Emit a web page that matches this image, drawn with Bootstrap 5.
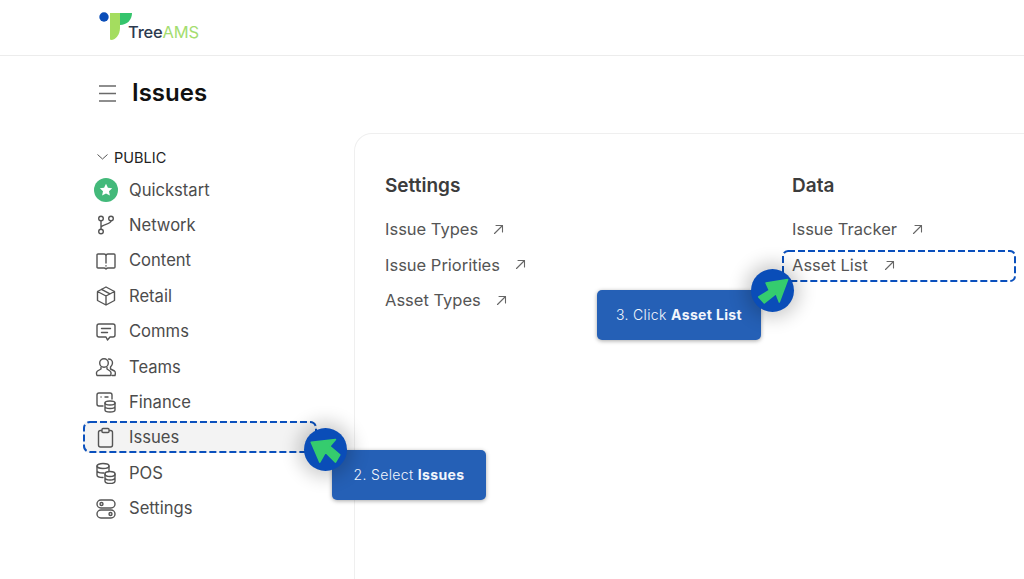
<!DOCTYPE html>
<html lang="en">
<head>
<meta charset="utf-8">
<title>Issues</title>
<link rel="stylesheet" href="https://cdn.jsdelivr.net/npm/bootstrap@5.3.0/dist/css/bootstrap.min.css">
<style>
html,body{height:579px;overflow:hidden}
body{font-family:"Inter","Liberation Sans",sans-serif;background:#fff;color:#454545}
svg{display:block;flex:none}
.stroke-ic{fill:none;stroke:#555;stroke-width:1.4;stroke-linecap:round;stroke-linejoin:round}
.arrow-ic{fill:none;stroke:#666;stroke-width:1.1;stroke-linecap:round;stroke-linejoin:round}
.top-bar{height:56px;padding-left:99px;border-bottom:1px solid #ececec}
.brand-mark{margin-top:12px}
.brand-word{font-size:16.5px;line-height:1;letter-spacing:-.2px;margin-left:-5px;margin-top:24px;color:#2c3a4f;font-weight:500}
.brand-word span{color:#a4dd6f;font-weight:400}
.title-row{height:77px;padding:0 0 2px 99px;gap:16px}
.title-row h1{font-size:24px;font-weight:600;color:#111;margin:0}
.work-area{height:446px}
.side-col{width:354px;flex:none;padding:15.4px 37px 0 83px}
.group-label{height:18px;padding-left:14px;gap:6px;font-size:14.5px;color:#222;margin-bottom:6px}
.menu-row{height:35.4px;gap:12px;padding-left:10px;font-size:16.6px;color:#4c4c4c;border:2px solid transparent;border-radius:6px}
.menu-row.active-row{height:32px;margin:.6px 0 2.8px;padding-top:2px;background:#f3f3f3;border-color:transparent}
.ic-slot{width:22px;display:flex;justify-content:center}
.panel-box{flex:1;border:1px solid #efefef;border-right:0;border-bottom:0;border-top-left-radius:18px;padding:37px 0 0 30px}
.panel-col{width:407px}
.panel-col+.panel-col{width:auto;flex:1}
.panel-col h2{font-size:19px;font-weight:600;color:#3c3c3c;margin:0 0 11px;line-height:30px}
.link-row{height:35.3px;gap:15px;font-size:16.5px;color:#555}
.link-row.marked{margin:3px 8px 0 -10px;padding:0 0 2px 10px;height:32px;width:234px;gap:16px}
.dash-frame{position:absolute;top:0;left:0;width:100%;height:100%;overflow:visible;pointer-events:none}
.dash-frame rect{x:1px;y:1px;width:calc(100% - 2px);height:calc(100% - 2px);fill:none;stroke:#0a50bd;stroke-width:2;stroke-dasharray:7 3}
.active-row .dash-frame{top:-2px;left:-2px;width:calc(100% + 4px);height:calc(100% + 4px)}
.callout{position:absolute;background:#2560b6;color:#f2f6fc;border-radius:5px;font-size:14px;font-weight:300;letter-spacing:.35px;height:50px;padding-bottom:2px;display:flex;align-items:center;justify-content:center;box-shadow:0 1px 4px rgba(0,0,0,.35)}
.callout b{font-weight:700}
.callout-issues{left:332px;top:450px;width:154px}
.callout-asset{left:597px;top:290px;width:164px}
.pointer{position:absolute;width:43px;height:43px;border-radius:50%;background:#0a4db8;box-shadow:0 0 18px 6px rgba(0,0,0,.2);display:flex;align-items:center;justify-content:center}
.pointer-issues{left:304px;top:428px}
.pointer-asset{left:751px;top:269px}
</style>
</head>
<body class="position-relative">
<header class="top-bar d-flex align-items-start">
  <svg class="brand-mark" width="34" height="29" viewBox="0 0 34 29">
    <circle cx="5" cy="5" r="4.700" fill="#0a4db8"/>
    <path d="M11 1h10v15c0 6-4 12-9 12-1 0-1-1-1-2z" fill="#a4dd5f"/>
    <path d="M21 1h12c0 7-5 12-12 12z" fill="#35c46c"/>
  </svg>
  <div class="brand-word">Tree<span>AMS</span></div>
</header>
<div class="title-row d-flex align-items-center">
  <svg width="17" height="17" viewBox="0 0 17 17"><path d="M0 1h17M0 8.500h17M0 16h17" stroke="#6a6a6a" stroke-width="1.600"/></svg>
  <h1>Issues</h1>
</div>
<main class="work-area d-flex">
  <nav class="side-col">
    <div class="group-label d-flex align-items-center">
      <svg width="11" height="6" viewBox="0 0 11 6"><path d="M.5.5 5.500 5 10.500.5" fill="none" stroke="#555" stroke-width="1"/></svg>PUBLIC
    </div>
    <div class="menu-row d-flex align-items-center">
      <span class="ic-slot"><svg width="24" height="24" viewBox="0 0 24 24"><circle cx="12" cy="12" r="12" fill="#43b97a"/><path d="M12 5.800l1.900 4 4.300.5-3.200 3 .9 4.300-3.900-2.200-3.900 2.200.9-4.300-3.200-3 4.300-.5z" fill="#fff"/></svg></span>Quickstart
    </div>
    <div class="menu-row d-flex align-items-center">
      <span class="ic-slot"><svg class="stroke-ic" width="22" height="22" viewBox="0 0 22 22"><circle cx="6" cy="4.500" r="2.300"/><circle cx="16" cy="4.500" r="2.300"/><circle cx="6" cy="17.500" r="2.300"/><path d="M6 6.800v8.400M16 6.800c0 4-10 3-10 7"/></svg></span>Network
    </div>
    <div class="menu-row d-flex align-items-center">
      <span class="ic-slot"><svg class="stroke-ic" width="22" height="22" viewBox="0 0 22 22"><path d="M3 4h6c1.200 0 2 .8 2 2 0-1.200.8-2 2-2h6c.6 0 1 .4 1 1v12c0 .6-.4 1-1 1h-6c-1 0-1.500.4-2 1-.5-.6-1-1-2-1H3c-.6 0-1-.4-1-1V5c0-.6.4-1 1-1zM11 6v7M11 15.800v.2"/></svg></span>Content
    </div>
    <div class="menu-row d-flex align-items-center">
      <span class="ic-slot"><svg class="stroke-ic" width="22" height="22" viewBox="0 0 22 22"><path d="M11 2l8.500 4.500v9L11 20l-8.500-4.500v-9zM2.500 6.500 11 11l8.500-4.500M11 11v9M6.500 4.300 15 8.800"/></svg></span>Retail
    </div>
    <div class="menu-row d-flex align-items-center">
      <span class="ic-slot"><svg class="stroke-ic" width="22" height="22" viewBox="0 0 22 22"><path d="M4 3h14c1.200 0 2 .8 2 2v9c0 1.200-.8 2-2 2h-3l-2.500 3-1.500-3H4c-1.200 0-2-.8-2-2V5c0-1.200.8-2 2-2zM6.500 7.500h9M6.500 11.500h6"/></svg></span>Comms
    </div>
    <div class="menu-row d-flex align-items-center">
      <span class="ic-slot"><svg class="stroke-ic" width="22" height="22" viewBox="0 0 22 22"><circle cx="9" cy="7" r="4.300"/><path d="M6 11.500v1.500L2.500 15c-1 .7-1.300 2.500-.5 4.500h13.500c.8-2 .5-3.800-.5-4.500L12 13v-1.500M13.500 3c2.500 0 4 2 4 4s-1 3-2 4v2l4 2c1 .7 1 2.500.5 4.500h-3"/></svg></span>Teams
    </div>
    <div class="menu-row d-flex align-items-center">
      <span class="ic-slot"><svg class="stroke-ic" width="22" height="22" viewBox="0 0 22 22"><path d="M8 15H4c-1.200 0-2-.8-2-2V4c0-1.200.8-2 2-2h11c1.200 0 2 .8 2 2v4M6 6h.1M10 6h3"/><ellipse cx="15" cy="12" rx="5" ry="2"/><path d="M10 12v7c0 1.200 2.200 2 5 2s5-.8 5-2v-7M10 15.500c0 1.200 2.200 2 5 2s5-.8 5-2"/></svg></span>Finance
    </div>
    <div class="menu-row active-row d-flex align-items-center position-relative">
      <span class="ic-slot"><svg class="stroke-ic" width="22" height="22" viewBox="0 0 22 22"><path d="M7 3.500H5.500c-1.200 0-2 .8-2 2V18c0 1.200.8 2 2 2h10c1.200 0 2-.8 2-2V5.500c0-1.200-.8-2-2-2H14M8 1.500h5c.6 0 1 .4 1 1v2c0 .6-.4 1-1 1H8c-.6 0-1-.4-1-1v-2c0-.6.4-1 1-1z"/></svg></span>Issues
      <svg class="dash-frame"><rect rx="6"/></svg>
    </div>
    <div class="menu-row d-flex align-items-center">
      <span class="ic-slot"><svg class="stroke-ic" width="22" height="22" viewBox="0 0 22 22"><ellipse cx="8" cy="4" rx="6" ry="2.500"/><path d="M2 4v9c0 1.400 2.700 2.500 6 2.500M2 8.500C2 9.900 4.700 11 8 11h1M14 4v5"/><ellipse cx="15" cy="12" rx="5" ry="2.500"/><path d="M10 12v7c0 1.400 2.200 2.500 5 2.500s5-1.100 5-2.500v-7M10 15.500C10 16.900 12.200 18 15 18s5-1.100 5-2.500"/></svg></span>POS
    </div>
    <div class="menu-row d-flex align-items-center">
      <span class="ic-slot"><svg class="stroke-ic" width="22" height="22" viewBox="0 0 22 22"><rect x="2" y="2" width="18" height="8" rx="4"/><rect x="2" y="12" width="18" height="8" rx="4"/><circle cx="6.500" cy="6" r="1.500"/><circle cx="15.500" cy="16" r="1.500"/></svg></span>Settings
    </div>
  </nav>
  <section class="panel-box d-flex">
    <div class="panel-col">
      <h2>Settings</h2>
      <div class="link-row d-flex align-items-center">Issue Types <svg class="arrow-ic" width="11" height="11" viewBox="0 0 11 11"><path d="M1.500 9.500l8-8M3 1.500h6.500V8"/></svg></div>
      <div class="link-row d-flex align-items-center">Issue Priorities <svg class="arrow-ic" width="11" height="11" viewBox="0 0 11 11"><path d="M1.500 9.500l8-8M3 1.500h6.500V8"/></svg></div>
      <div class="link-row d-flex align-items-center">Asset Types <svg class="arrow-ic" width="11" height="11" viewBox="0 0 11 11"><path d="M1.500 9.500l8-8M3 1.500h6.500V8"/></svg></div>
    </div>
    <div class="panel-col">
      <h2>Data</h2>
      <div class="link-row d-flex align-items-center">Issue Tracker <svg class="arrow-ic" width="11" height="11" viewBox="0 0 11 11"><path d="M1.500 9.500l8-8M3 1.500h6.500V8"/></svg></div>
      <div class="link-row marked d-flex align-items-center position-relative">Asset List <svg class="arrow-ic" width="11" height="11" viewBox="0 0 11 11"><path d="M1.500 9.500l8-8M3 1.500h6.500V8"/></svg>
        <svg class="dash-frame"><rect rx="5"/></svg>
      </div>
    </div>
  </section>
</main>

<div class="callout callout-issues">2. Select&nbsp;<b>Issues</b></div>
<div class="pointer pointer-issues">
  <svg width="32" height="32" viewBox="0 0 32 32"><path d="M1.200 8.200 25.500 5.500 19.800 12.200 29.800 20.800 25.500 28.200 15.500 18.200 9.800 28.200Z" fill="#35cc6e" stroke="#35cc6e" stroke-width="1.500" stroke-linejoin="round"/></svg>
</div>
<div class="callout callout-asset">3. Click&nbsp;<b>Asset List</b></div>
<div class="pointer pointer-asset">
  <svg width="32" height="32" viewBox="0 0 32 32"><path d="M30.700 4.600 9 8 12.300 15.300 1.700 22 7.300 28 19 18.600 22.300 27Z" fill="#35cc6e" stroke="#35cc6e" stroke-width="1.500" stroke-linejoin="round"/></svg>
</div>
<script src="https://cdn.jsdelivr.net/npm/bootstrap@5.3.0/dist/js/bootstrap.bundle.min.js"></script>
</body>
</html>
